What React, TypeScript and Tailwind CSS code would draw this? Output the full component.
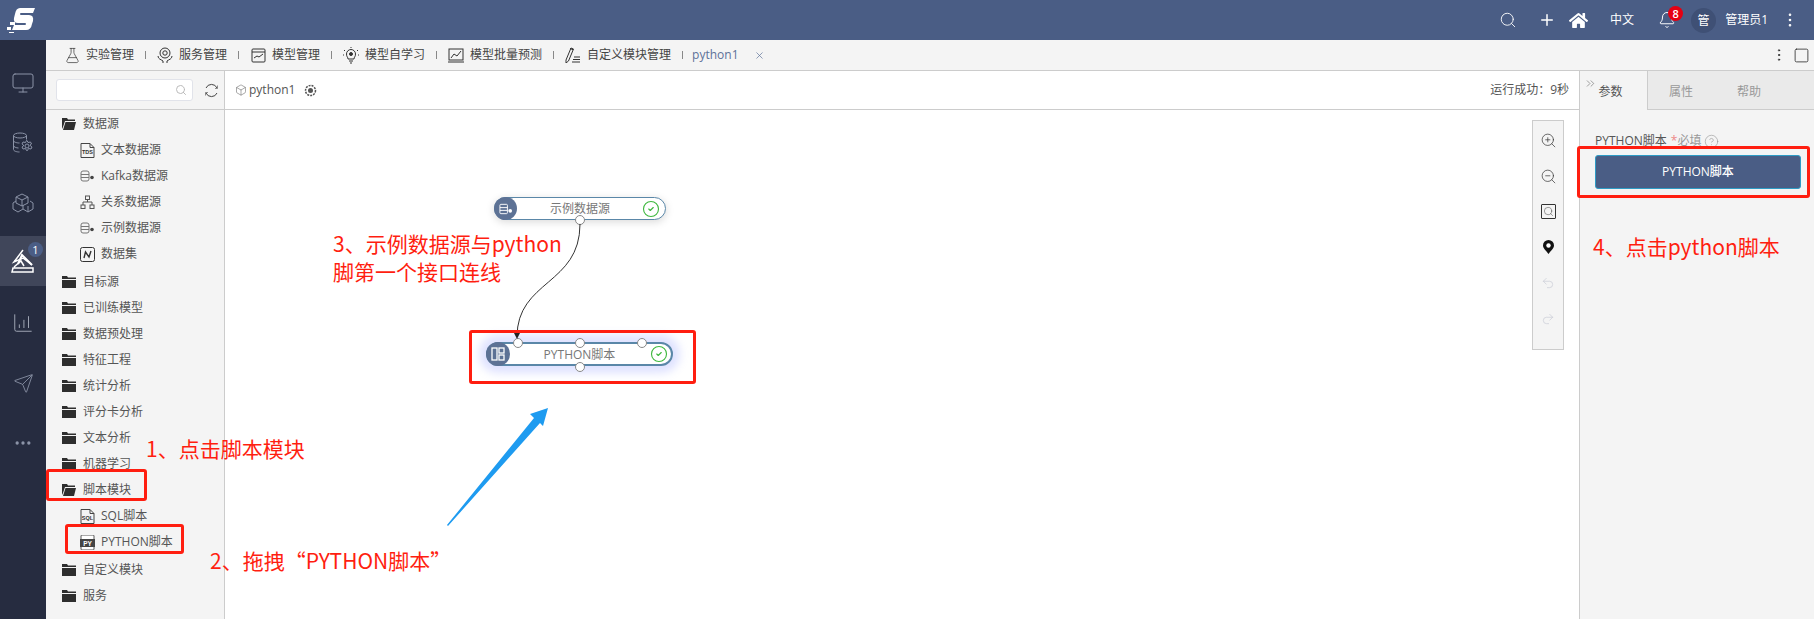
import { Search, Plus, Bell, MoreVertical, X, ZoomIn, ZoomOut, Undo2, Redo2, ChevronsRight, CircleHelp, FlaskConical, Monitor, ChartColumnIncreasing, Send, Ellipsis, Box, Square, CircleCheck } from "lucide-react"
import { FaHome } from "react-icons/fa"

const font = { fontFamily: '"Open Sans", "Noto Sans CJK SC", sans-serif' }

type IconProps = { className?: string }

const Flask = ({ className }: IconProps) => (
  <FlaskConical size={17} strokeWidth={1} className={className} />
)

const HandCircle = ({ className }: IconProps) => (
  <svg className={className} width="16" height="17" viewBox="0 0 16 17" fill="none" stroke="currentColor" strokeWidth="1">
    <circle cx="8" cy="6" r="5" />
    <circle cx="8" cy="6" r="2.2" />
    <path d="M1 9c0 3 3 3.500 5 5v2M15 9c0 3-3 3.500-5 5v2" />
  </svg>
)

const ModelBox = ({ className }: IconProps) => (
  <svg className={className} width="15" height="15" viewBox="0 0 15 15" fill="none" stroke="currentColor" strokeWidth="1">
    <rect x="1" y="1" width="13" height="13" rx="1" />
    <path d="M1 4h13M3 10l3-2 2 1 4-3" />
  </svg>
)

const BulbRays = ({ className }: IconProps) => (
  <svg className={className} width="16" height="17" viewBox="0 0 16 17" fill="none" stroke="currentColor" strokeWidth="1">
    <path d="M5 12c0-2-1.500-2-1.500-5a4.500 4.500 0 0 1 9 0c0 3-1.500 3-1.500 5zM6 14h4M7 16h2" />
    <circle cx="8" cy="7" r="1.500" fill="currentColor" />
    <path d="M8 0v1M1 3l1 1M15 3l-1 1M0 8h1M15 8h1" />
  </svg>
)

const ChartBox = ({ className }: IconProps) => (
  <svg className={className} width="16" height="15" viewBox="0 0 16 15" fill="none" stroke="currentColor" strokeWidth="1">
    <rect x="1" y="1" width="14" height="11" />
    <path d="M0 14h16M3 10l3-4 3 2 4-5" />
  </svg>
)

const PencilLines = ({ className }: IconProps) => (
  <svg className={className} width="16" height="16" viewBox="0 0 16 16" fill="none" stroke="currentColor" strokeWidth="1">
    <path d="M1 13l5-12 2.500 1-5 12-2.500 2zM5 1.500l3 1.200" />
    <path d="M9 10h6M8 12.500h7M7 15h8" />
  </svg>
)

const RefreshArcs = ({ className }: IconProps) => (
  <svg className={className} width="15" height="15" viewBox="0 0 15 15" fill="none" stroke="currentColor" strokeWidth="1">
    <path d="M2 5a6 6 0 0 1 11 0M13 10a6 6 0 0 1-11 0" />
    <path d="M13.500 2.500V5.500H11M1.500 12.500V9.500H4" strokeWidth="0.6" />
  </svg>
)

const FolderClosed = () => (
  <svg width="14" height="12" viewBox="0 0 14 12" fill="#2e2e2e">
    <path d="M0 0h5l1 1.500h8V3H0zM0 4h14v8H0z" />
  </svg>
)

const FolderOpened = () => (
  <svg width="14" height="12" viewBox="0 0 14 12" fill="#2e2e2e">
    <path d="M0 0h5l1 1.500h7V3H3L1 9 0 11zM3.500 4H14l-2 8H1z" />
  </svg>
)

const DocLabel = ({ text }: { text: string }) => (
  <svg width="15" height="15" viewBox="0 0 15 15" fill="none" stroke="#444" strokeWidth="1">
    <path d="M1 .5h9l4 4v10H1zM10 .5v4h4" />
    <text x="7.500" y="11" fontSize="5.500" textAnchor="middle" fill="#333" stroke="none" fontWeight="700" fontFamily="Liberation Sans">{text}</text>
  </svg>
)

const DbGear = () => (
  <svg width="15" height="12" viewBox="0 0 15 12" fill="none" stroke="#777" strokeWidth="1">
    <rect x="1" y="1" width="8" height="10" rx="2" />
    <path d="M1 4.500h8M1 7.500h8" />
    <circle cx="12" cy="7.500" r="1.800" fill="#444" stroke="none" />
  </svg>
)

const NetIcon = () => (
  <svg width="15" height="15" viewBox="0 0 15 15" fill="none" stroke="#555" strokeWidth="1">
    <rect x="5.500" y="1" width="4" height="3.500" />
    <rect x="1" y="10" width="4" height="3.500" />
    <rect x="10" y="10" width="4" height="3.500" />
    <path d="M7.500 4.500V7M3 10V7h9v3" />
  </svg>
)

const DataSet = () => (
  <svg width="15" height="15" viewBox="0 0 15 15" fill="none" stroke="#333">
    <rect x=".5" y=".5" width="14" height="14" rx="2" />
    <path d="M4 11l1.500-6 3.500 5 2-6" strokeWidth="1.400" />
  </svg>
)

const PyBox = () => (
  <svg width="15" height="15" viewBox="0 0 15 15">
    <rect x="1" y="0" width="13" height="15" rx="1" fill="#fff" stroke="#555" />
    <rect x="0" y="4" width="15" height="8" fill="#444" />
    <text x="7.500" y="10.500" fontSize="6.500" textAnchor="middle" fill="#fff" fontWeight="700" fontFamily="Liberation Sans">PY</text>
  </svg>
)

const DbCog = () => (
  <svg width="22" height="22" viewBox="0 0 22 22" fill="none" stroke="currentColor" strokeWidth="1">
    <ellipse cx="8" cy="3.500" rx="6.500" ry="2.500" />
    <path d="M1.500 3.500v14c0 1.500 3 2.500 6 2.500M1.500 8.500c0 1.500 3 2.500 6 2.500M1.500 13.500c0 1.500 3 2.500 5 2.500M14.500 3.500v4" />
    <circle cx="15" cy="14" r="2" />
    <path d="M15 8.500l1 2 2.500-.5 1 2-1.500 1 .5 1 1.500 1-1 2-2.500-.5-1 2h-1l-1-2-2.500.5-1-2 1.500-1v-1l-1.500-1 1-2 2.500.5 1-2z" />
  </svg>
)

const Cubes = () => (
  <svg width="22" height="20" viewBox="0 0 22 20" fill="none" stroke="currentColor" strokeWidth="1">
    <path d="M10 1l6 3v6l-6 3-6-3V4zM4 4l6 3 6-3M10 7v6" />
    <path d="M4 8L1 10v6l5 3 5-3M21 10l-3-2M21 10v6l-5 3-5-3v-4M16 13v6" />
  </svg>
)

const Stack = () => (
  <svg width="24" height="26" viewBox="0 0 24 26" fill="none" stroke="white" strokeWidth="1.500">
    <path d="M1 24h21v-4H2zM3 19l7-6 3 5M12 2L3 14l9-4 9 7" />
    <path d="M7 16l4-9 10 10" strokeWidth="2" />
  </svg>
)

const MapDot = () => (
  <svg width="11" height="14" viewBox="0 0 11 14">
    <path d="M5.500 0a5.500 5.500 0 0 1 5.500 5.500c0 3-3 5-5.500 8.500C3 10.500 0 8.500 0 5.500A5.500 5.500 0 0 1 5.500 0z" fill="#111" />
    <circle cx="5.500" cy="5.500" r="2.200" fill="#fff" />
  </svg>
)

const GearDot = () => (
  <svg width="13" height="13" viewBox="0 0 13 13" fill="none" stroke="#555">
    <circle cx="6.500" cy="6.500" r="5" strokeWidth="1.500" strokeDasharray="2 1" />
    <circle cx="6.500" cy="6.500" r="2.500" fill="#555" stroke="none" />
  </svg>
)

const PanelIcon = () => (
  <svg width="14" height="14" viewBox="0 0 14 14" fill="none" stroke="white" strokeWidth="1.300">
    <rect x="1" y="1" width="5" height="12" />
    <rect x="8" y="1" width="5" height="5" />
    <rect x="8" y="8" width="5" height="5" />
  </svg>
)

const NodeDb = () => (
  <svg width="14" height="12" viewBox="0 0 15 12" fill="none" stroke="white" strokeWidth="1">
    <rect x="1" y="1" width="8" height="10" rx="1" />
    <path d="M1 4.500h8M1 7.500h8" />
    <circle cx="12" cy="8" r="2" fill="white" stroke="none" />
  </svg>
)

const Logo = () => (
  <svg width="30" height="26" viewBox="0 0 30 26" fill="white">
    <path d="M13 1h16l-2 5H15q-1 0-1 1t1 1h8q5 0 4 6l-1 3q-1 6-6 6H6l2-5h11q1 0 1-1t-1-1h-7q-5 0-4-5l1-4q1-6 5-6z" />
    <rect x="1" y="20" width="4" height="3" />
    <rect x="4" y="15" width="5" height="3" />
    <rect x="3" y="25" width="5" height="1" />
  </svg>
)

const tabs = [
  { icon: Flask, label: "实验管理" },
  { icon: HandCircle, label: "服务管理" },
  { icon: ModelBox, label: "模型管理" },
  { icon: BulbRays, label: "模型自学习" },
  { icon: ChartBox, label: "模型批量预测" },
  { icon: PencilLines, label: "自定义模块管理" },
]

const tree = [
  { label: "数据源", open: true, children: [
    { icon: <DocLabel text="TDS" />, label: "文本数据源" },
    { icon: <DbGear />, label: "Kafka数据源" },
    { icon: <NetIcon />, label: "关系数据源" },
    { icon: <DbGear />, label: "示例数据源" },
    { icon: <DataSet />, label: "数据集" },
  ] },
  { label: "目标源" },
  { label: "已训练模型" },
  { label: "数据预处理" },
  { label: "特征工程" },
  { label: "统计分析" },
  { label: "评分卡分析" },
  { label: "文本分析" },
  { label: "机器学习" },
  { label: "脚本模块", open: true, children: [
    { icon: <DocLabel text="SQL" />, label: "SQL脚本" },
    { icon: <PyBox />, label: "PYTHON脚本" },
  ] },
  { label: "自定义模块" },
  { label: "服务" },
]

const Port = ({ cls }: { cls: string }) => (
  <span className={`absolute w-[10px] h-[10px] rounded-full bg-white border border-[#888] ${cls}`} />
)

const App = () => {
  return (
    <div lang="zh-CN" className="relative w-[1814px] h-[619px] overflow-hidden bg-white text-[#555] text-[12px]" style={font}>
      <header className="h-10 bg-[#4a5d85] flex items-center pl-[6px] pr-[15px] text-white">
        <Logo />
        <div className="ml-auto flex items-center">
          <Search size={18} strokeWidth={1.2} />
          <Plus size={18} strokeWidth={2} className="ml-[21px]" />
          <FaHome size={19} className="ml-[13px]" />
          <span className="ml-[22px] text-[12px]">中文</span>
          <span className="relative ml-[24px]">
            <Bell size={18} strokeWidth={1.3} />
            <span className="absolute -top-[5px] left-[10px] w-[15px] h-[15px] rounded-full bg-[#e60012] text-[11px] leading-[15px] text-center font-semibold">8</span>
          </span>
          <span className="ml-[15px] w-[25px] h-[25px] rounded-full bg-[#3f5075] text-[12px] leading-[25px] text-center">管</span>
          <span className="ml-[9px] text-[12px]">管理员1</span>
          <MoreVertical size={18} strokeWidth={1.5} className="ml-[13px]" />
        </div>
      </header>

      <div className="flex h-[579px]">
        <aside className="w-[46px] bg-[#262c40] text-[#8b93a7] flex flex-col items-center">
          <div className="h-[60px] mt-[13px] flex items-center"><Monitor size={24} strokeWidth={1} /></div>
          <div className="h-[60px] flex items-center"><DbCog /></div>
          <div className="h-[60px] flex items-center"><Cubes /></div>
          <div className="relative h-[50px] w-full mt-[3px] bg-[#40465a] flex items-center justify-center">
            <Stack />
            <span className="absolute top-[6px] right-[3px] w-[15px] h-[15px] rounded-full bg-[#4a5d85] text-white text-[11px] leading-[15px] text-center">1</span>
          </div>
          <div className="h-[60px] mt-[7px] flex items-center"><ChartColumnIncreasing size={22} strokeWidth={1} className="text-[#a9afbd]" /></div>
          <div className="h-[60px] flex items-center"><Send size={21} strokeWidth={1} /></div>
          <div className="h-[60px] flex items-center"><Ellipsis size={20} strokeWidth={2} /></div>
        </aside>

        <div className="flex-1 flex flex-col min-w-0">
          <nav className="h-[31px] bg-[#f4f4f4] border-b border-[#ccc] flex items-center pl-[18px] pr-[4px]">
            {tabs.map((t) => (
              <div key={t.label} className="flex items-center">
                <span className="w-[16px] flex justify-center text-[#333]"><t.icon className="shrink-0" /></span>
                <span className="ml-[6px] text-[#444]">{t.label}</span>
                <span className="ml-[11px] mr-[11px] w-px h-[8px] bg-[#888]" />
              </div>
            ))}
            <span className="-ml-[2px] text-[#5d7199]">python1</span>
            <X size={11} strokeWidth={1.5} className="ml-[15px] text-[#5d7199]" />
            <MoreVertical size={16} strokeWidth={1.5} className="ml-auto text-[#333]" />
            <Square size={17} strokeWidth={1.2} className="ml-[6px] text-[#333]" />
          </nav>

          <div className="flex-1 flex min-h-0">
            <div className="w-[179px] bg-[#f4f4f4] border-r border-[#ccc] shrink-0">
              <div className="h-[39px] border-b border-[#ccc] flex items-center pl-[10px]">
                <div className="w-[137px] h-[22px] bg-white border border-[#e1e3ea] rounded-[3px] flex items-center justify-end pr-[5px]">
                  <Search size={12} className="text-[#bbb]" />
                </div>
                <RefreshArcs className="ml-[11px] text-[#444]" />
              </div>
              <ul className="pl-[16px] pt-[1px]">
                {tree.map((n) => (
                  <li key={n.label} className={n.children ? "mb-[2px]" : ""}>
                    <div className="h-[26px] flex items-center">
                      {n.open ? <FolderOpened /> : <FolderClosed />}
                      <span className="ml-[7px]">{n.label}</span>
                    </div>
                    {n.children?.map((c) => (
                      <div key={c.label} className="h-[26px] flex items-center pl-[18px]">
                        <span className="w-[15px] flex justify-center">{c.icon}</span>
                        <span className="ml-[6px]">{c.label}</span>
                      </div>
                    ))}
                  </li>
                ))}
              </ul>
            </div>

            <main className="flex-1 flex flex-col min-w-0">
              <div className="h-[39px] border-b border-[#ccc] flex items-center pl-[10px] pr-[10px]">
                <Box size={12} strokeWidth={1} />
                <span className="ml-[2px] text-[#555]">python1</span>
                <span className="ml-[9px]"><GearDot /></span>
                <span className="ml-auto">运行成功：9秒</span>
              </div>
              <div className="relative flex-1 bg-white">
                <div className="absolute left-[269px] top-[87px] w-[172px] h-[23px] rounded-full bg-white border border-[#5a87a8] shadow-[0_2px_8px_rgba(0,0,0,0.15)] text-center leading-[21px] text-[#777]">
                  示例数据源
                  <span className="absolute -left-[1px] -top-[1px] w-[23px] h-[23px] rounded-full bg-[#5d7295] flex items-center justify-center"><NodeDb /></span>
                  <CircleCheck size={18} strokeWidth={1.5} className="absolute right-[5px] top-[2px] text-[#3fb83f]" />
                  <Port cls="left-[80px] -bottom-[6px]" />
                </div>
                <div className="absolute left-[261px] top-[232px] w-[187px] h-[24px] rounded-full bg-white border-2 border-[#5a87a8] shadow-[0_0_8px_7px_rgba(150,160,255,0.3)] text-center leading-[21px] text-[#777]">
                  PYTHON脚本
                  <span className="absolute -left-[2px] -top-[2px] w-[24px] h-[24px] rounded-full bg-[#5d7295] flex items-center justify-center"><PanelIcon /></span>
                  <CircleCheck size={18} strokeWidth={1.5} className="absolute right-[3px] top-[1px] text-[#3fb83f]" />
                  <Port cls="left-[25px] -top-[6px]" />
                  <Port cls="left-[87px] -top-[6px]" />
                  <Port cls="left-[149px] -top-[6px]" />
                  <Port cls="left-[87px] -bottom-[8px]" />
                </div>
                <svg className="absolute left-0 top-0" width="400" height="260" fill="none">
                  <path d="M355 114C355 175 292 170 292 227" stroke="#333" strokeWidth="1" />
                  <path d="M289 223l3 6 3-6z" fill="#222" />
                </svg>
                <div className="absolute right-[15px] top-[10px] w-[32px] h-[230px] bg-[#f4f4f4] border border-[#ccc] flex flex-col items-center pt-[11px] text-[#333]">
                  <div className="h-[36px]"><ZoomIn size={17} strokeWidth={1} /></div>
                  <div className="h-[36px]"><ZoomOut size={17} strokeWidth={1} /></div>
                  <div className="h-[36px]"><span className="block border border-[#333] p-px rounded-[1px]"><Search size={11} strokeWidth={1} /></span></div>
                  <div className="h-[36px]"><MapDot /></div>
                  <div className="h-[36px] text-[#c8ccd6]"><Undo2 size={14} strokeWidth={1.2} /></div>
                  <div className="h-[36px] text-[#c8ccd6]"><Redo2 size={14} strokeWidth={1.2} /></div>
                </div>
              </div>
            </main>

            <div className="w-[235px] shrink-0 border-l border-[#ccc] bg-[#f4f4f4]">
              <div className="h-[39px] flex">
                <div className="relative w-[68px] border-r border-[#ccc] flex items-center justify-center pr-[6px] pt-[3px]">
                  <ChevronsRight size={13} strokeWidth={1} className="absolute left-[4px] top-[6px]" />
                  参数
                </div>
                <div className="flex-1 bg-[#eaeaea] border-b border-[#ccc] flex items-center pt-[3px] text-[#999]">
                  <span className="ml-[21px]">属性</span>
                  <span className="ml-[44px]">帮助</span>
                </div>
              </div>
              <div className="pl-[15px] pt-[24px]">
                <div className="h-[14px] flex items-center leading-none">
                  PYTHON脚本<span className="text-[#e88] ml-1">*</span><span className="text-[#999]">必填</span>
                  <CircleHelp size={15} strokeWidth={1} className="ml-[3px] text-[#999]" />
                </div>
                <button className="mt-[7px] w-[206px] h-[34px] rounded-[3px] bg-[#4a5d85] border border-[#2e9bc5] text-white font-medium text-[12px]">PYTHON脚本</button>
              </div>
            </div>
          </div>
        </div>
      </div>

      {/* 标注层 */}
      <div className="absolute left-[46px] top-[469px] w-[101px] h-[32px] border-[3px] border-[#ff1e10] rounded-[3px]" />
      <div className="absolute left-[65px] top-[524px] w-[119px] h-[30px] border-[3px] border-[#ff1e10] rounded-[3px]" />
      <div className="absolute left-[469px] top-[330px] w-[227px] h-[54px] border-[3px] border-[#ff1e10] rounded-[3px]" />
      <div className="absolute left-[1577px] top-[146px] w-[233px] h-[52px] border-[3px] border-[#ff1e10] rounded-[3px]" />
      <div className="font-['Noto_Sans_CJK_SC',sans-serif] text-[#ff1e10] text-[21px] leading-[28px]">
        <span className="absolute left-[146px] top-[434px] whitespace-nowrap">1、点击脚本模块</span>
        <span className="absolute left-[210px] top-[546px] whitespace-nowrap">2、拖拽“PYTHON脚本”</span>
        <span className="absolute left-[333px] top-[229px] whitespace-nowrap">3、示例数据源与python<br />脚第一个接口连线</span>
        <span className="absolute left-[1593px] top-[232px] whitespace-nowrap">4、点击python脚本</span>
      </div>
      <svg className="absolute left-[440px] top-[400px]" width="120" height="135" fill="#1e9bf0">
        <path d="M108 8L103 26 100 23 8 126 7 125 94 18 90 14z" />
      </svg>
    </div>
  )
}

export default App
